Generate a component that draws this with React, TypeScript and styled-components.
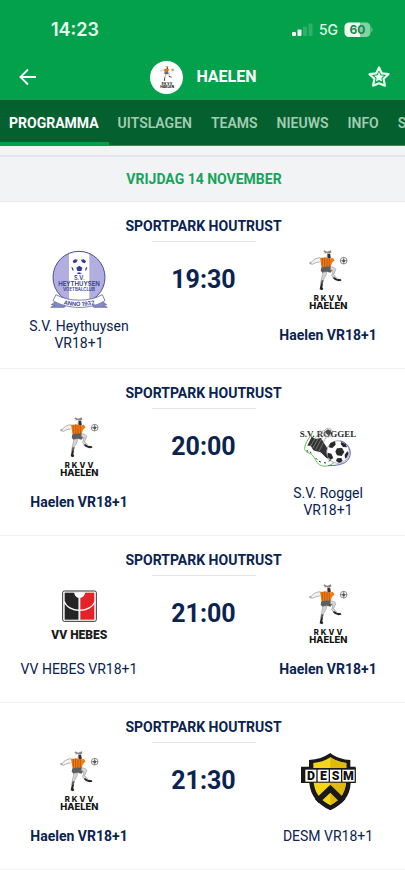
import React from "react";
import styled, { createGlobalStyle } from "styled-components";

const GlobalStyle = createGlobalStyle`
  * { box-sizing: border-box; }
  body { margin: 0; background: #fff; font-family: Roboto, "Liberation Sans", sans-serif; color: #0a2350; }
  button { font: inherit; border: 0; background: none; padding: 0; cursor: pointer; }
`;

const Page = styled.div`
  width: 100%;
  overflow-x: hidden;
`;

const Header = styled.header`
  background: #04a14c;
  color: #fff;
`;

const StatusBar = styled.div`
  display: flex;
  align-items: center;
  justify-content: space-between;
  height: 56px;
  padding: 4px 32px 0 51px;
`;

const Clock = styled.time`
  font: 600 18px/24px Inter, sans-serif;
  color: #eafff0;
`;

const Indicators = styled.div`
  display: flex;
  align-items: center;
  gap: 6px;
  font: 500 14px/20px Inter, sans-serif;
  color: #e2fbe9;
`;

const TitleBar = styled.div`
  display: grid;
  grid-template-columns: 40px 1fr 40px;
  align-items: center;
  height: 44px;
  padding: 0 6px 2px 8px;
`;

const IconButton = styled.button`
  display: grid;
  place-items: center;
  height: 40px;
  color: #fff;
`;

const Club = styled.div`
  display: flex;
  align-items: center;
  justify-content: center;
  gap: 13px;
`;

const ClubBadge = styled.span`
  display: grid;
  place-items: center;
  width: 33px;
  height: 33px;
  border-radius: 50%;
  background: #fff;
`;

const ClubName = styled.h1`
  margin: 0;
  font-size: 16px;
  line-height: 20px;
  font-weight: 700;
`;

const Tabs = styled.nav`
  display: flex;
  height: 46px;
  overflow: hidden;
  background: #04602f;
  border-bottom: 1px solid #04a14c;
`;

const Tab = styled.button<{ $active?: boolean }>`
  flex: none;
  height: 45px;
  padding: 3px 10px 0 9px;
  border-bottom: 3px solid ${(p) => (p.$active ? "#04a14c" : "transparent")};
  color: ${(p) => (p.$active ? "#fff" : "#a3cdb3")};
  font-size: 14px;
  font-weight: ${(p) => (p.$active ? 700 : 600)};
`;

const DateHeading = styled.h2`
  margin: 0;
  padding: 0 0 0 3px;
  border-top: 2px solid #e3e6f2;
  border-bottom: 1px solid #e6e9ec;
  background: #f1f3f5;
  color: #16a35a;
  font-size: 14px;
  line-height: 44px;
  font-weight: 700;
  text-align: center;
`;

const Schedule = styled.main`
  padding-top: 9px;
  background: #f2f4f6;
`;

const MatchList = styled.ul`
  margin: 0;
  padding: 0;
  list-style: none;
  background: #fff;
`;

const Match = styled.li`
  min-height: 167px;
  padding: 16px 0 0 2px;
  border-bottom: 1px solid #eeeff1;
`;

const Venue = styled.h3`
  width: 104px;
  margin: 0 auto;
  padding-bottom: 7px;
  border-bottom: 1px solid #e3e4e6;
  display: flex;
  justify-content: center;
  white-space: nowrap;
  font-size: 14px;
  line-height: 16px;
  font-weight: 700;
`;

const Fixture = styled.div`
  display: grid;
  grid-template-columns: 1fr 95px 1fr;
  padding-top: 8px;
`;

const Team = styled.div`
  display: flex;
  flex-direction: column;
  align-items: center;
  gap: 8px;
  padding: 0 18px;
`;

const TeamName = styled.span<{ $own?: boolean }>`
  display: flex;
  align-items: center;
  min-height: 34px;
  text-align: center;
  font-size: 14px;
  line-height: 17px;
  font-weight: ${(p) => (p.$own ? 700 : 400)};
`;

const Kickoff = styled.time`
  height: 60px;
  text-align: center;
  font-size: 25px;
  line-height: 60px;
  font-weight: 700;
`;

function SignalIcon() {
  return (
    <svg width="21" height="14" viewBox="0 0 21 14" aria-hidden="true">
      <rect x="0" y="9" width="4" height="4" rx="1" fill="#effff4" />
      <rect x="5.5" y="6.5" width="4" height="6.5" rx="1" fill="#effff4" />
      <rect x="11" y="3.5" width="4" height="9.5" rx="1" fill="#2fb068" />
      <rect x="16.500" y="0.500" width="4" height="12.500" rx="1" fill="#2fb068" />
    </svg>
  );
}

function BatteryIcon() {
  return (
    <svg width="29" height="16" viewBox="0 0 29 16" role="img" aria-label="60%">
      <path d="M5 .5h11v14.500H5a4.500 4.500 0 0 1-4.500-4.500V5A4.500 4.500 0 0 1 5 .5Z" fill="#effff4" />
      <path d="M16 .5h6A4.500 4.500 0 0 1 26.500 5v5.500A4.500 4.500 0 0 1 22 15h-6Z" fill="#83d2a3" />
      <path d="M27.500 5.500c1.300.5 1.300 4 0 4.500Z" fill="#83d2a3" />
      <text x="13.500" y="12" textAnchor="middle" fontFamily="Inter, sans-serif" fontWeight="700" fontSize="12" fill="#138a48">60</text>
    </svg>
  );
}

function BackIcon() {
  return (
    <svg width="18" height="18" viewBox="0 0 18 18" fill="none" stroke="currentColor" strokeWidth="1.800" aria-hidden="true">
      <path d="M17 9H2M9 1.500 1.500 9 9 16.500" />
    </svg>
  );
}

function StarIcon() {
  return (
    <svg width="24" height="24" viewBox="0 0 24 24" aria-hidden="true">
      <path
        d="M12 2.500 14.800 8.400 21.500 9.200 16.600 13.800 17.900 20.700 12 18.300 6.100 20.700 7.400 13.800 2.500 9.200 9.200 8.400Z"
        fill="#04a14c" stroke="#e9fff0" strokeWidth="2.200" strokeLinejoin="round"
      />
      <path d="M12 6.800 13.500 10.200 17 10.700 14.400 13.100 15.100 16.600 12 15 8.900 16.600 9.600 13.100 7 10.700 10.500 10.200Z" fill="#e9fff0" />
    </svg>
  );
}

function HaelenLogo({ size = 60 }: { size?: number }) {
  return (
    <svg width={size} height={size} viewBox="54 30 180 180" role="img" aria-label="RKVV Haelen">
      <g fill="none" stroke="#8b8b8b" strokeWidth="2">
        <path d="M121 53C108 54 98 60 93 68l4 5c6-3 13-7 22-7" fill="#f4f4f4" />
        <path d="M91 66l-2 4 5 3" stroke="#555" />
      </g>
      <path d="M141 39l10 2 1 13-8 2-4-6Z" fill="#b8aaa2" />
      <path d="M133 31l8 4 12-4 1 7-5 2-10-1-6 2 2-4-5-1Z" fill="#8d8986" />
      <path d="M143 42l7-1 2 13-5 3-4-4Z" fill="#39302f" />
      <path d="M120 54l18-2 10 4 10-3 6 8-8 8-4 11-27 2-3-15Z" fill="#f07d16" />
      <path d="M127 54v27M134 53v29M141 55v26M148 57v23" stroke="#a6480d" strokeWidth="2" />
      <path d="M124 82l27-3 8 10-8 9-10-3-13 4-6-7Z" fill="#5d5d5b" />
      <path d="M151 80c9 1 17 5 16 9-1 6-5 9-6 15l8 9-5 5-9-11 4-14-8-4Z" fill="#d9d9d9" stroke="#777" strokeWidth="1.500" />
      <path d="M163 112l8 4 12 2 1 4-8 2-11-4-7-7Z" fill="#252525" />
      <path d="M129 97l12-2-4 13-6 10-5 14-4-2 3-16Z" fill="#d5d5d5" stroke="#888" strokeWidth="1.500" />
      <path d="M123 128l6 2-2 12 3 5-4 4-7-3Z" fill="#232323" />
      <path d="M125 119l6 3-4 11-5-2Z" fill="#5a5a5a" />
      <circle cx="191" cy="62" r="10" fill="#fff" stroke="#5b5b5b" strokeWidth="2" />
      <path d="M191 52v6M191 66v6M181 62h6M195 62h6" stroke="#555" strokeWidth="2" />
      <path d="M191 57l5 4-2 6h-6l-2-6Z" fill="#555" />
      <g fill="#141414" fontFamily="Inter, Liberation Sans, sans-serif" fontWeight="800" textAnchor="middle">
        <text x="147" y="184" fontSize="23" letterSpacing="6">RKVV</text>
        <text x="145" y="207" fontSize="28">HAELEN</text>
      </g>
    </svg>
  );
}

function HeythuysenLogo() {
  return (
    <svg width="60" height="60" viewBox="57 30 180 180" role="img" aria-label="S.V. Heythuysen">
      <defs>
        <clipPath id="heythuysen-disc"><circle cx="147" cy="112" r="78" /></clipPath>
      </defs>
      <circle cx="147" cy="112" r="78" fill="#b2afe0" />
      <path d="M117 30h61v170h-61Z" fill="#fff" clipPath="url(#heythuysen-disc)" />
      <circle cx="147" cy="112" r="78" fill="none" stroke="#484e9b" strokeWidth="3" />
      <circle cx="148" cy="80" r="24" fill="#fff" />
      <path d="M148 77l9 6-3 10h-12l-3-10ZM128 63l7-5 8 1-3 8-9 3ZM168 63l-7-5-8 1 3 8 9 3ZM124 80l5 3 2 9-4-1ZM172 80l-5 3-2 9 4-1ZM139 100l8-3 9 3-8 3Z" fill="#3439a0" />
      <path d="M64 194l17-12 30 13-9 7H62l12-5ZM230 194l-17-12-30 13 9 7h40l-12-5Z" fill="#8588c2" stroke="#555b9f" strokeWidth="2" />
      <path d="M78 164c38 22 101 22 139 0l8 18c-42 27-112 27-156 0Z" fill="#fff" stroke="#656ba6" strokeWidth="2.500" />
      <path id="heythuysen-ribbon" d="M88 189c35 12 82 12 119 0" fill="none" />
      <g fill="#333a91" fontFamily="Inter, Liberation Sans, sans-serif" fontWeight="600" textAnchor="middle">
        <text x="148" y="121" fontSize="17">S.V.</text>
        <text x="147" y="138" fontSize="18">HEYTHUYSEN</text>
        <text x="147" y="153" fontSize="13">VOETBALCLUB</text>
        <text fontSize="17"><textPath href="#heythuysen-ribbon" startOffset="50%">ANNO 1932</textPath></text>
      </g>
    </svg>
  );
}

function RoggelLogo() {
  return (
    <svg width="60" height="60" viewBox="54 21 180 180" role="img" aria-label="S.V. Roggel">
      <g fontFamily="Liberation Serif, serif" fontWeight="700" fontSize="27" fill="#2d2d2d" textAnchor="middle">
        <text x="144" y="80">S.V. ROGGEL</text>
      </g>
      <path d="M92 77c-9 13-17 24-18 38-1 12 13 12 20 18 14 11 14 30 31 34 13 4 24 0 36-8l-10-17Z" fill="#fff" stroke="#62bf54" strokeWidth="3" />
      <path d="M82 107l13-27 12 7 16-3 37 61-15 4-23-19-22-9-8-14Z" fill="#333" />
      <path d="M98 115l32-55M107 119l31-57M117 123l29-57M91 109l31-50" stroke="#999" strokeWidth="2" />
      <path d="M100 123l22 5 17 18 14 3" fill="none" stroke="#fff" strokeWidth="3" />
      <circle cx="145" cy="68" r="13" fill="none" stroke="#777" strokeWidth="1.500" />
      <path d="M136 64l7-6 9 3 2 9-7 5-8-3Z" fill="#4b4b4b" />
      <circle cx="174" cy="126" r="34" fill="#fff" stroke="#83849a" strokeWidth="2" />
      <path d="M181 93c37 8 40 57 6 68-9 4-25 6-42 6" fill="none" stroke="#5960c4" strokeWidth="3" />
      <path d="M171 115l15-1 7 12-8 12-14-2-5-11ZM151 99l14-5 2 10-10 10-11-2ZM184 96l13 6 4 10-12-1-7-9ZM143 128l11 3 6 13-8 5-9-9ZM171 145l13-1 4 9-10 6-10-6ZM202 124l4 5-5 13-6 4-1-12Z" fill="#292929" />
      <path d="M81 121l2 3M91 126l2 3M108 145l3 3M118 154l4 2M133 158l4 1M147 153l4-2" stroke="#333" strokeWidth="3" strokeLinecap="round" />
    </svg>
  );
}

function HebesLogo() {
  return (
    <svg width="60" height="60" viewBox="57 28 180 180" role="img" aria-label="VV Hebes">
      <rect x="98" y="49" width="101" height="91" rx="5" fill="#fff" stroke="#343434" strokeWidth="3" />
      <path d="M104 54h42v81h-42Z" fill="#252525" />
      <path d="M150 54h43v81h-43Z" fill="#e52228" />
      <path d="M132 53h34c-2 10-7 16-15 17v65h-5V70c-8-1-13-8-14-17Z" fill="#fff" />
      <path d="M102 80c15 36 78 36 94 0" fill="none" stroke="#fff" strokeWidth="4" />
      <text x="148" y="192" textAnchor="middle" fontFamily="Roboto, sans-serif" fontWeight="900" fontSize="36" fill="#1d1d1d">VV HEBES</text>
    </svg>
  );
}

function DesmLogo() {
  return (
    <svg width="60" height="60" viewBox="54 33 180 180" role="img" aria-label="DESM">
      <path d="M151 39c18 14 38 20 60 21v20h16v49h-15c-2 39-23 64-61 82-38-18-59-43-63-82H63V80h24V60c25-1 46-8 64-21Z" fill="#191919" />
      <path d="M151 52c15 10 31 15 48 17v48c-1 38-15 61-48 79-34-17-49-41-51-79V69c19-1 36-7 51-17Z" fill="#f5d51c" />
      <path d="M151 52c15 10 31 15 48 17v48c-1 38-15 61-48 79Z" fill="#dfb90d" />
      <path d="M151 134l45 44-13 12-32-32-34 32-12-12Z" fill="#191919" />
      <path d="M69 84h158v44H73V98h-4Z" fill="#191919" />
      <g fill="#fff">
        <rect x="76" y="89" width="33" height="36" /><rect x="113" y="89" width="33" height="36" />
        <rect x="150" y="89" width="33" height="36" /><rect x="187" y="89" width="37" height="36" />
      </g>
      <g fontFamily="Roboto, sans-serif" fontWeight="900" fontSize="37" fill="#111" textAnchor="middle">
        <text x="93" y="121">D</text><text x="130" y="121">E</text><text x="167" y="121">S</text><text x="205" y="121">M</text>
      </g>
    </svg>
  );
}

type Side = { name: string; logo: () => React.JSX.Element; own?: boolean };

const haelen: Side = { name: "Haelen VR18+1", logo: () => <HaelenLogo />, own: true };

const matches: { time: string; home: Side; away: Side }[] = [
  { time: "19:30", home: { name: "S.V. Heythuysen VR18+1", logo: HeythuysenLogo }, away: haelen },
  { time: "20:00", home: haelen, away: { name: "S.V. Roggel VR18+1", logo: RoggelLogo } },
  { time: "21:00", home: { name: "VV HEBES VR18+1", logo: HebesLogo }, away: haelen },
  { time: "21:30", home: haelen, away: { name: "DESM VR18+1", logo: DesmLogo } },
];

const tabs = ["PROGRAMMA", "UITSLAGEN", "TEAMS", "NIEUWS", "INFO", "S"];

function TeamSide({ side }: { side: Side }) {
  const Logo = side.logo;
  return (
    <Team>
      <Logo />
      <TeamName $own={side.own}>{side.name}</TeamName>
    </Team>
  );
}

export default function App() {
  return (
    <Page>
      <GlobalStyle />
      <Header>
        <StatusBar>
          <Clock>14:23</Clock>
          <Indicators>
            <SignalIcon />
            <span>5G</span>
            <BatteryIcon />
          </Indicators>
        </StatusBar>
        <TitleBar>
          <IconButton aria-label="Terug"><BackIcon /></IconButton>
          <Club>
            <ClubBadge><HaelenLogo size={22} /></ClubBadge>
            <ClubName>HAELEN</ClubName>
          </Club>
          <IconButton aria-label="Favoriet"><StarIcon /></IconButton>
        </TitleBar>
      </Header>
      <Tabs>
        {tabs.map((t, i) => (
          <Tab key={t} $active={i === 0}>{t}</Tab>
        ))}
      </Tabs>
      <Schedule>
        <DateHeading>VRIJDAG 14 NOVEMBER</DateHeading>
        <MatchList>
          {matches.map((m) => (
            <Match key={m.time}>
              <Venue>SPORTPARK HOUTRUST</Venue>
              <Fixture>
                <TeamSide side={m.home} />
                <Kickoff>{m.time}</Kickoff>
                <TeamSide side={m.away} />
              </Fixture>
            </Match>
          ))}
        </MatchList>
      </Schedule>
    </Page>
  );
}
